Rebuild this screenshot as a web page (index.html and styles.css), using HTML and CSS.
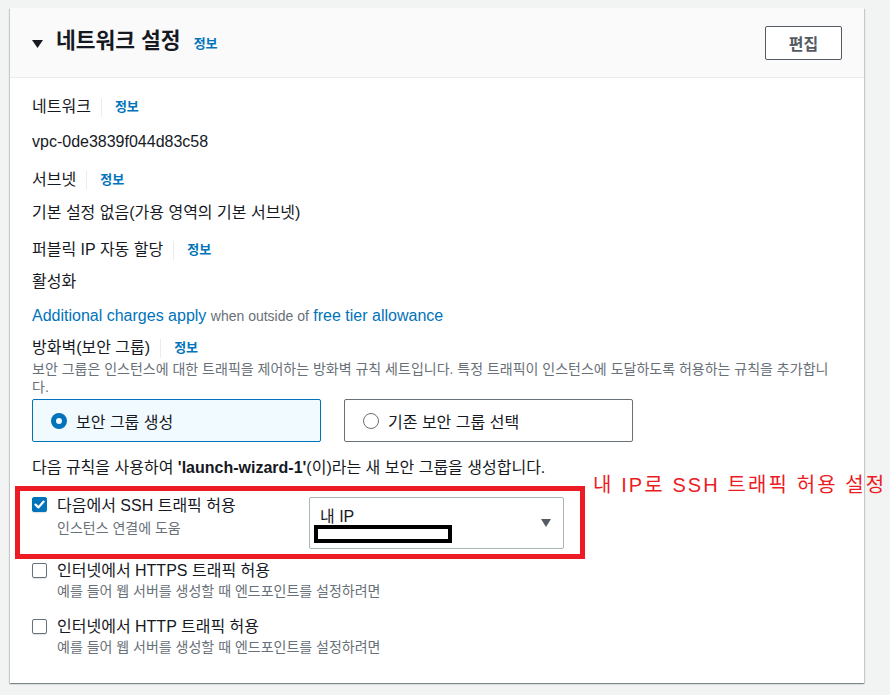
FILE: index.html
```html
<html>
<head>
  <meta charset="UTF-8" />
  <title>네트워크 설정</title>
  <link rel="stylesheet" href="styles.css">
</head>
<body>
  <div class="page">
    <div class="card">
      <div class="card-header">
        <div class="header-title">
          <svg class="caret" width="11" height="8" viewBox="0 0 11 8"><polygon points="0,0 11,0 5.5,8" fill="#16191f"/></svg>
          <h2>네트워크 설정</h2>
          <a class="info">정보</a>
        </div>
        <button class="btn-edit">편집</button>
      </div>

      <div class="card-body">
        <div class="field-label first"><span>네트워크</span><span class="divider"></span><a class="info">정보</a></div>
        <div class="field-value v1">vpc-0de3839f044d83c58</div>

        <div class="field-label gap16"><span>서브넷</span><span class="divider"></span><a class="info">정보</a></div>
        <div class="field-value v2">기본 설정 없음(가용 영역의 기본 서브넷)</div>

        <div class="field-label gap15"><span>퍼블릭 IP 자동 할당</span><span class="divider"></span><a class="info">정보</a></div>
        <div class="field-value v3">활성화</div>

        <div class="charges">
          <a class="link">Additional charges apply</a> <span class="muted">when outside of</span> <a class="link">free tier allowance</a>
        </div>

        <div class="field-label fw"><span>방화벽(보안 그룹)</span><span class="divider"></span><a class="info">정보</a></div>
        <div class="desc">보안 그룹은 인스턴스에 대한 트래픽을 제어하는 방화벽 규칙 세트입니다. 특정 트래픽이 인스턴스에 도달하도록 허용하는 규칙을 추가합니다.</div>

        <div class="tiles">
          <div class="tile selected"><span class="radio on"></span>보안 그룹 생성</div>
          <div class="tile"><span class="radio"></span>기존 보안 그룹 선택</div>
        </div>

        <div class="rule-note">다음 규칙을 사용하여 <b>'launch-wizard-1'</b>(이)라는 새 보안 그룹을 생성합니다.</div>

        <div class="highlight">
          <div class="check-row">
            <span class="checkbox checked">
              <svg width="15" height="15" viewBox="0 0 15 15"><path d="M3.5 7.6 L6.4 10.4 L11.6 4.6" fill="none" stroke="#fff" stroke-width="2.2" stroke-linecap="round" stroke-linejoin="round"/></svg>
            </span>
            <div class="check-text">
              <div class="check-label">다음에서 SSH 트래픽 허용</div>
              <div class="check-sub">인스턴스 연결에 도움</div>
            </div>
          </div>
          <div class="select">
            <div class="select-value">
              <div>내 IP</div>
              <div class="redacted"></div>
            </div>
            <svg width="10" height="8" viewBox="0 0 10 8"><polygon points="0,0 10,0 5,8" fill="#545b64"/></svg>
          </div>
        </div>

        <div class="check-row plain">
          <span class="checkbox"></span>
          <div class="check-text">
            <div class="check-label">인터넷에서 HTTPS 트래픽 허용</div>
            <div class="check-sub">예를 들어 웹 서버를 생성할 때 엔드포인트를 설정하려면</div>
          </div>
        </div>

        <div class="check-row plain second">
          <span class="checkbox"></span>
          <div class="check-text">
            <div class="check-label">인터넷에서 HTTP 트래픽 허용</div>
            <div class="check-sub">예를 들어 웹 서버를 생성할 때 엔드포인트를 설정하려면</div>
          </div>
        </div>
      </div>
    </div>

    <div class="callout">내 IP로 SSH 트래픽 허용 설정</div>
  </div>
</body>
</html>
```

FILE: styles.css
```css
body {
  margin: 0;
  background: #f2f3f3;
  font-family: "Liberation Sans", "Noto Sans CJK KR", sans-serif;
  color: #16191f;
  font-size: 16px;
}

.page {
  position: relative;
  padding: 8px 0 0 10px;
  height: 687px;
}

.card {
  width: 854px;
  background: #fff;
  box-shadow: 0 1px 1px 0 rgba(0,28,36,0.3), 1px 1px 1px 0 rgba(0,28,36,0.15), -1px 1px 1px 0 rgba(0,28,36,0.15);
}

.card-header {
  height: 70px;
  box-sizing: border-box;
  background: #fafafa;
  border-bottom: 1px solid #eaeded;
  padding: 0 22px;
  display: flex;
  align-items: center;
  justify-content: space-between;
}

.header-title {
  display: flex;
  align-items: center;
}

.caret {
  margin-right: 13px;
  margin-top: 2px;
}

h2 {
  margin: -4px 13px 0 0;
  font-size: 21.5px;
  font-weight: bold;
  line-height: 26px;
}

.info {
  color: #0073bb;
  font-weight: bold;
  font-size: 13px;
}

.btn-edit {
  width: 77px;
  height: 34px;
  background: #fff;
  border: 1px solid #545b64;
  border-radius: 2px;
  color: #545b64;
  font-family: inherit;
  font-weight: bold;
  font-size: 16px;
  padding: 0;
}

.card-body {
  padding: 18px 22px 27px 22px;
}

.field-label {
  display: flex;
  align-items: center;
  line-height: 22px;
}

.divider {
  width: 1px;
  height: 19px;
  background: #eaeded;
  margin: 0 13px 0 10px;
}

.gap16 { margin-top: 16px; }
.gap15 { margin-top: 15px; }
.fw { margin-top: 10px; }

.field-value {
  line-height: 22px;
}

.v1 { margin-top: 13px; }
.v2 { margin-top: 11px; }
.v3 { margin-top: 10px; }

.charges {
  margin-top: 12px;
  line-height: 22px;
}

.link {
  color: #0073bb;
}

.muted {
  color: #687078;
  font-size: 14px;
}

.desc {
  max-width: 805px;
  margin-top: 1px;
  font-size: 14px;
  line-height: 18px;
  color: #687078;
}

.tiles {
  display: flex;
  gap: 23px;
  margin-top: 3px;
}

.tile {
  width: 289px;
  height: 43px;
  box-sizing: border-box;
  border: 1px solid #687078;
  border-radius: 2px;
  padding-left: 18px;
  display: flex;
  align-items: center;
}

.tile.selected {
  background: #f1faff;
  border-color: #0073bb;
}

.radio {
  width: 16px;
  height: 16px;
  box-sizing: border-box;
  border: 1.5px solid #687078;
  border-radius: 50%;
  margin-right: 9px;
}

.radio.on {
  border: 5px solid #0073bb;
}

.rule-note {
  margin-top: 15px;
  line-height: 22px;
}

.highlight {
  margin: 7px 0 0 -17px;
  width: 570px;
  box-sizing: border-box;
  border: 5px solid #ed1c24;
  padding: 4px 16px 5px 12px;
  display: flex;
  justify-content: space-between;
  align-items: flex-start;
}

.check-row {
  display: flex;
  align-items: flex-start;
}

.checkbox {
  width: 15px;
  height: 15px;
  flex-shrink: 0;
  box-sizing: border-box;
  border: 1px solid #687078;
  border-radius: 2px;
  margin: 3px 10px 0 0;
  box-shadow: 0 1px 1px rgba(0,0,0,0.12);
}

.checkbox.checked {
  margin-top: 2px;
  background: #0073bb;
  border-color: #0073bb;
}

.checkbox svg {
  display: block;
  margin: -1px;
}

.check-label {
  line-height: 22px;
}

.check-sub {
  margin-top: 2px;
  font-size: 14px;
  line-height: 18px;
  color: #687078;
}

.plain {
  margin-top: 1px;
}

.plain .check-sub {
  margin-top: 0;
}

.second {
  margin-top: 16px;
}

.select {
  margin-top: 2px;
  width: 255px;
  height: 52px;
  box-sizing: border-box;
  border: 1px solid #aab7b8;
  border-radius: 2px;
  padding: 9px 12px 0 10px;
  display: flex;
  justify-content: space-between;
  align-items: flex-start;
}

.select svg {
  margin-top: 12px;
}

.select-value {
  line-height: 20px;
}

.redacted {
  width: 138px;
  height: 18px;
  box-sizing: border-box;
  border: 4px solid #000;
  background: #fff;
  margin: -2px 0 0 -6px;
}

.callout {
  position: absolute;
  left: 593px;
  top: 473px;
  color: #ed1c24;
  font-size: 20px;
  line-height: 24px;
  letter-spacing: 2.1px;
  white-space: nowrap;
}
```
